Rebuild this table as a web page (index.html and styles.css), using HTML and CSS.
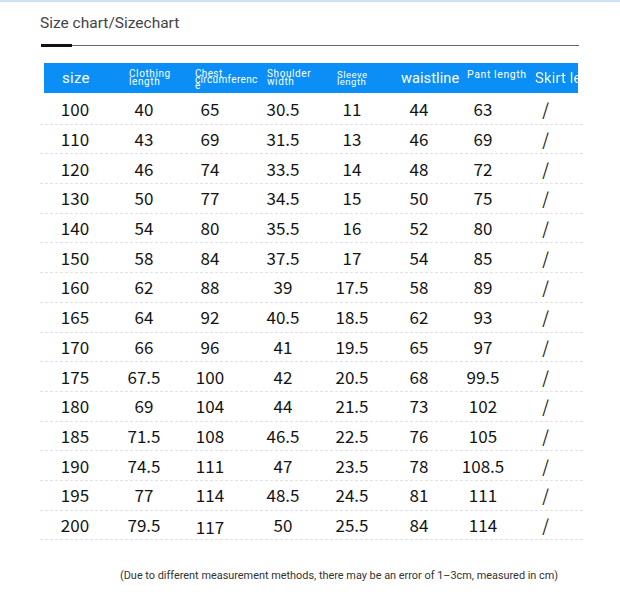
FILE: index.html
```html
<!DOCTYPE html>
<html>
<head>
<meta charset="utf-8">
<link rel="stylesheet" href="styles.css">
</head>
<body>
<div class="page">
  <div class="title">Size chart/Sizechart</div>
  <div class="rule"><span class="rule-mark"></span></div>
  <div class="head">
    <div class="h h-size">size</div>
    <div class="h h-small">Clothing<br>length</div>
    <div class="h h-chest">Chest circumference</div>
    <div class="h h-small">Shoulder<br>width</div>
    <div class="h h-tiny">Sleeve<br>length</div>
    <div class="h h-big">waistline</div>
    <div class="h h-pant">Pant length</div>
    <div class="h h-big h-skirt">Skirt length</div>
  </div>
  <div class="rows" id="rows"></div>
  <div class="note">(Due to different measurement methods, there may be an error of 1–3cm, measured in cm)</div>
</div>
<script>
var data = [
["100","40","65","30.5","11","44","63","/"],
["110","43","69","31.5","13","46","69","/"],
["120","46","74","33.5","14","48","72","/"],
["130","50","77","34.5","15","50","75","/"],
["140","54","80","35.5","16","52","80","/"],
["150","58","84","37.5","17","54","85","/"],
["160","62","88","39","17.5","58","89","/"],
["165","64","92","40.5","18.5","62","93","/"],
["170","66","96","41","19.5","65","97","/"],
["175","67.5","100","42","20.5","68","99.5","/"],
["180","69","104","44","21.5","73","102","/"],
["185","71.5","108","46.5","22.5","76","105","/"],
["190","74.5","111","47","23.5","78","108.5","/"],
["195","77","114","48.5","24.5","81","111","/"],
["200","79.5","117","50","25.5","84","114","/"]
];
var rows = document.getElementById('rows');
data.forEach(function(r, i){
  var row = document.createElement('div');
  row.className = 'row';
  r.forEach(function(v, j){
    var c = document.createElement('div');
    c.className = 'cell' + (i === 14 && j === 2 ? ' low' : '');
    c.textContent = v;
    row.appendChild(c);
  });
  rows.appendChild(row);
});
</script>
</body>
</html>
```
FILE: styles.css
```css
html, body {
  margin: 0;
  padding: 0;
  background: #fff;
}
body {
  border-top: 2px solid #cfe1f4;
  width: 620px;
  height: 602px;
  overflow: hidden;
}
.page {
  padding: 11px 0 0 40px;
  font-family: Roboto, "Liberation Sans", sans-serif;
}
.title {
  font-size: 15.5px;
  color: #444;
  height: 20px;
  line-height: 20px;
}
.rule {
  margin-top: 12px;
  width: 538px;
  height: 1px;
  background: #666;
  position: relative;
  margin-left: 1px;
}
.rule-mark {
  position: absolute;
  left: 0;
  top: -1px;
  width: 31px;
  height: 3px;
  background: #111;
}
.head {
  margin-top: 17px;
  margin-left: 4px;
  width: 534px;
  height: 30px;
  background: #0b8ef6;
  display: grid;
  grid-template-columns: 85px 66px 72px 70px 64px 66px 68px 43px;
  align-items: center;
  color: #fff;
}
.h {
  white-space: nowrap;
}
.h-size {
  font-size: 15px;
  padding-left: 18px;
  letter-spacing: 0.3px;
}
.h-small {
  font-size: 10px;
  line-height: 8px;
  letter-spacing: 0.6px;
}
.h-tiny {
  font-size: 9.5px;
  line-height: 7px;
  letter-spacing: 0.5px;
}
.h-chest {
  font-size: 10px;
  line-height: 6px;
  letter-spacing: 0.35px;
  white-space: normal;
  width: 64px;
  overflow-wrap: anywhere;
  word-break: normal;
  padding-top: 4px;
}
.h-big {
  font-size: 14.5px;
  letter-spacing: 0.1px;
}
.h-pant {
  font-size: 10.5px;
  letter-spacing: 0.6px;
  align-self: start;
  padding-top: 5px;
}
.h-skirt {
  font-size: 15px;
  background: linear-gradient(to right, #fff 0, #fff 43px, #d6eafc 43px, #d6eafc 100%);
  -webkit-background-clip: text;
  background-clip: text;
  color: transparent;
  overflow: visible;
}
.rows {
  margin-top: 2px;
  width: 543px;
}
.row {
  display: grid;
  grid-template-columns: 70px 68px 64px 82px 56px 78px 50px 75px;
  height: 29.7px;
  box-sizing: border-box;
  border-bottom: 1px dashed #e2e2e2;
  align-items: center;
}
.cell {
  text-align: center;
  font-family: "Noto Sans CJK SC", "Noto Sans", sans-serif;
  font-size: 17px;
  color: #141414;
  line-height: 20px;
}
.cell.low {
  padding-top: 4px;
}
.note {
  margin-top: 29px;
  margin-left: 80px;
  font-size: 10.9px;
  color: #333;
  white-space: nowrap;
}
```
